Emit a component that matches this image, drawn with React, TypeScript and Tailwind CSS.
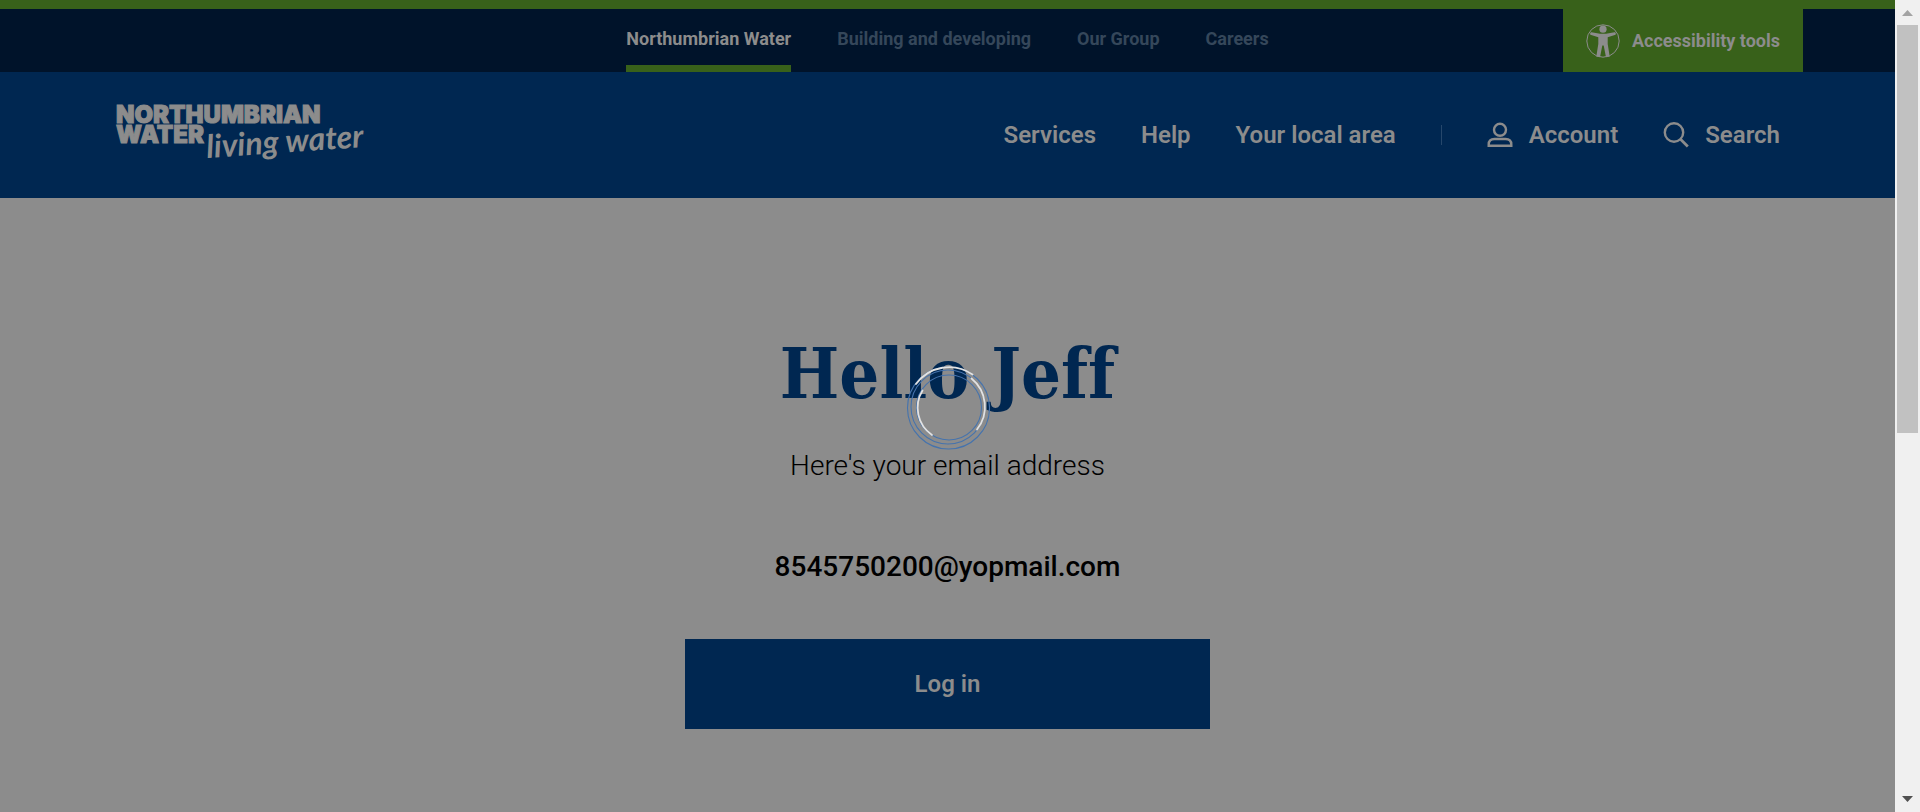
const topLinks = ['Building and developing', 'Our Group', 'Careers'];
const mainLinks = ['Services', 'Help', 'Your local area'];

function Logo() {
  return (
    <a href="#home" aria-label="Northumbrian Water living water" className="block">
      <svg viewBox="0 0 260 80" className="block w-[260px]" fill="#8c8c8c">
        <text fontFamily="Inter, sans-serif" fontWeight="900" fontSize="24" stroke="#8c8c8c" strokeWidth="1">
          <tspan x="1" y="28">
            NORTHUMBRIAN
          </tspan>
          <tspan x="1" y="48">
            WATER
          </tspan>
        </text>
        <text
          x="92"
          y="63"
          fontFamily="Lato, sans-serif"
          fontStyle="italic"
          fontWeight="700"
          fontSize="32"
          transform="rotate(-4 92 63)"
        >
          living water
        </text>
      </svg>
    </a>
  );
}

function AccessibilityIcon() {
  return (
    <svg viewBox="0 0 34 34" className="size-[34px]" fill="#8c8c8c" aria-hidden="true">
      <circle cx="17" cy="17" r="16.2" fill="none" stroke="#8c8c8c" strokeWidth="1" />
      <circle cx="17" cy="5.2" r="3.6" />
      <path d="M5.5 8.2C4 8 3.6 10.7 5.2 11.1L12.3 13.2V20L10.3 32.4L14 33.2L16.3 21.5H17.7L20 33.2L23.7 32.4L21.7 20V13.2L28.8 11.1C30.4 10.7 30 8 28.5 8.2L20 9.8H14Z" />
    </svg>
  );
}

function AccountIcon() {
  return (
    <svg viewBox="0 0 26 26" className="size-[26px]" fill="none" stroke="#8c8c8c" strokeWidth="2.4" aria-hidden="true">
      <circle cx="13" cy="7.8" r="6" />
      <path d="M1.7 23.8V22.5C1.7 19 4 17 7.5 17H18.5C22 17 24.3 19 24.3 22.5V23.8Z" />
    </svg>
  );
}

function SearchIcon() {
  return (
    <svg viewBox="0 0 26 26" className="size-[26px]" fill="none" stroke="#8c8c8c" aria-hidden="true">
      <circle cx="11" cy="10.5" r="9.2" strokeWidth="2.4" />
      <path d="M17.3 17L24.8 24.4" strokeWidth="2.8" />
    </svg>
  );
}

function Spinner() {
  return (
    <svg viewBox="0 0 84 84" className="size-[84px]" fill="none" role="status" aria-label="Loading">
      <g stroke="#4573ad" strokeWidth="1.1">
        <circle cx="42.5" cy="42" r="41" />
        <circle cx="42" cy="41" r="37" />
        <circle cx="43" cy="41.5" r="32.5" />
      </g>
      <g stroke="#e2e2e2" strokeWidth="1.8" strokeLinecap="round">
        <path d="M10 18A41 41 0 0 1 66.5 8.5" />
        <path d="M65.5 12.5A36.5 36.5 0 0 1 71 63.5" />
        <path d="M16.5 24.5A33 33 0 0 0 26 69" />
      </g>
    </svg>
  );
}

function Scrollbar() {
  return (
    <div className="flex w-[25px] shrink-0 flex-col items-center bg-[#f0f0f0]" aria-hidden="true">
      <svg viewBox="0 0 25 25" className="size-[25px] shrink-0">
        <path d="M7 16L12.5 10L18 16Z" fill="#a3a3a3" />
      </svg>
      <div className="flex w-full grow flex-col items-center">
        <div className="w-[21px] grow-[53] bg-[#c1c1c1]" />
        <div className="grow-[46]" />
      </div>
      <svg viewBox="0 0 25 25" className="size-[25px] shrink-0">
        <path d="M7 9L12.5 15L18 9Z" fill="#505050" />
      </svg>
    </div>
  );
}

export default function App() {
  return (
    <div className="flex min-h-screen bg-[#8c8c8c] font-['Roboto',sans-serif] text-[#8c8c8c]">
      <div className="flex min-w-0 grow flex-col">
        <header>
          <div className="border-t-9 border-[#38611a] bg-[#00132a] px-[92px]">
            <div className="grid grid-cols-[1fr_auto_1fr]">
              <nav aria-label="Sites" className="col-start-2 flex gap-[46px] text-[18px] font-bold leading-[24px]">
                <a href="#nw" aria-current="page" className="border-b-7 border-[#38611a] pt-[18px] pb-[14px]">
                  Northumbrian Water
                </a>
                {topLinks.map((label) => (
                  <a key={label} href="#site" className="pt-[18px] text-[#35475a]">
                    {label}
                  </a>
                ))}
              </nav>
              <button
                type="button"
                className="flex items-center gap-3 justify-self-end bg-[#38611a] px-[23px] text-[18px] font-bold leading-[24px]"
              >
                <AccessibilityIcon />
                Accessibility tools
              </button>
            </div>
          </div>
          <div className="flex h-[126px] items-center justify-between bg-[#002751] px-[115px]">
            <Logo />
            <nav aria-label="Main" className="flex items-center gap-[45px] text-[24px] font-semibold leading-[32px]">
              {mainLinks.map((label) => (
                <a key={label} href="#section">
                  {label}
                </a>
              ))}
              <span className="h-5 w-px bg-[#26476b]" />
              <a href="#account" className="flex items-center gap-4">
                <AccountIcon />
                Account
              </a>
              <a href="#search" className="flex items-center gap-4">
                <SearchIcon />
                Search
              </a>
            </nav>
          </div>
        </header>
        <main className="flex flex-col items-center pt-[132px] text-center text-black">
          <div className="relative">
            <h1 className="font-['DejaVu_Serif_Condensed','DejaVu_Serif',serif] text-[70px] font-bold leading-[88px] text-[#002751] [font-variant-ligatures:none]">
              Hello Jeff
            </h1>
            <div className="absolute inset-x-0 top-[36px] flex justify-center">
              <Spinner />
            </div>
          </div>
          <p className="mt-[28px] text-[28px] font-[350] leading-[40px]">Here's your email address</p>
          <p className="mt-[61px] text-[28px] font-medium leading-[40px]">8545750200@yopmail.com</p>
          <button
            type="button"
            className="mt-[52px] h-[90px] w-[525px] max-w-full bg-[#002751] text-[24px] font-semibold text-[#8c8c8c]"
          >
            Log in
          </button>
        </main>
      </div>
      <Scrollbar />
    </div>
  );
}
